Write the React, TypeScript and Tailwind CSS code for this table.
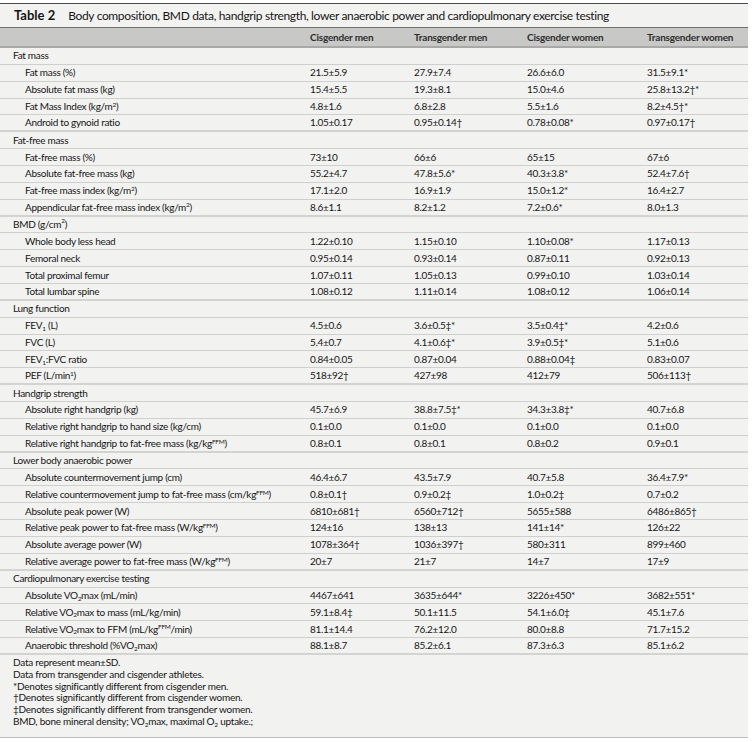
import React from "react";

type Row = { label: React.ReactNode; vals: [string, string, string, string] };
type Section = { title: React.ReactNode; rows: Row[] };

const Sup = ({ children }: { children: React.ReactNode }) => (
  <sup className="text-[6.5px]">{children}</sup>
);
const Sub = ({ children }: { children: React.ReactNode }) => (
  <sub className="text-[6.5px]">{children}</sub>
);

const VO2 = () => (
  <>
    VO<Sub>2</Sub>
  </>
);

const sections: Section[] = [
  {
    title: "Fat mass",
    rows: [
      { label: "Fat mass (%)", vals: ["21.5±5.9", "27.9±7.4", "26.6±6.0", "31.5±9.1*"] },
      { label: "Absolute fat mass (kg)", vals: ["15.4±5.5", "19.3±8.1", "15.0±4.6", "25.8±13.2†*"] },
      {
        label: (
          <>
            Fat Mass Index (kg/m<Sup>2</Sup>)
          </>
        ),
        vals: ["4.8±1.6", "6.8±2.8", "5.5±1.6", "8.2±4.5†*"],
      },
      { label: "Android to gynoid ratio", vals: ["1.05±0.17", "0.95±0.14†", "0.78±0.08*", "0.97±0.17†"] },
    ],
  },
  {
    title: "Fat-free mass",
    rows: [
      { label: "Fat-free mass (%)", vals: ["73±10", "66±6", "65±15", "67±6"] },
      { label: "Absolute fat-free mass (kg)", vals: ["55.2±4.7", "47.8±5.6*", "40.3±3.8*", "52.4±7.6†"] },
      {
        label: (
          <>
            Fat-free mass index (kg/m<Sup>2</Sup>)
          </>
        ),
        vals: ["17.1±2.0", "16.9±1.9", "15.0±1.2*", "16.4±2.7"],
      },
      {
        label: (
          <>
            Appendicular fat-free mass index (kg/m<Sup>2</Sup>)
          </>
        ),
        vals: ["8.6±1.1", "8.2±1.2", "7.2±0.6*", "8.0±1.3"],
      },
    ],
  },
  {
    title: (
      <>
        BMD (g/cm<Sup>2</Sup>)
      </>
    ),
    rows: [
      { label: "Whole body less head", vals: ["1.22±0.10", "1.15±0.10", "1.10±0.08*", "1.17±0.13"] },
      { label: "Femoral neck", vals: ["0.95±0.14", "0.93±0.14", "0.87±0.11", "0.92±0.13"] },
      { label: "Total proximal femur", vals: ["1.07±0.11", "1.05±0.13", "0.99±0.10", "1.03±0.14"] },
      { label: "Total lumbar spine", vals: ["1.08±0.12", "1.11±0.14", "1.08±0.12", "1.06±0.14"] },
    ],
  },
  {
    title: "Lung function",
    rows: [
      {
        label: (
          <>
            FEV<Sub>1</Sub> (L)
          </>
        ),
        vals: ["4.5±0.6", "3.6±0.5‡*", "3.5±0.4‡*", "4.2±0.6"],
      },
      { label: "FVC (L)", vals: ["5.4±0.7", "4.1±0.6‡*", "3.9±0.5‡*", "5.1±0.6"] },
      {
        label: (
          <>
            FEV<Sub>1</Sub>:FVC ratio
          </>
        ),
        vals: ["0.84±0.05", "0.87±0.04", "0.88±0.04‡", "0.83±0.07"],
      },
      {
        label: (
          <>
            PEF (L/min<Sup>1</Sup>)
          </>
        ),
        vals: ["518±92†", "427±98", "412±79", "506±113†"],
      },
    ],
  },
  {
    title: "Handgrip strength",
    rows: [
      { label: "Absolute right handgrip (kg)", vals: ["45.7±6.9", "38.8±7.5‡*", "34.3±3.8‡*", "40.7±6.8"] },
      { label: "Relative right handgrip to hand size (kg/cm)", vals: ["0.1±0.0", "0.1±0.0", "0.1±0.0", "0.1±0.0"] },
      {
        label: (
          <>
            Relative right handgrip to fat-free mass (kg/kg<Sup>FFM</Sup>)
          </>
        ),
        vals: ["0.8±0.1", "0.8±0.1", "0.8±0.2", "0.9±0.1"],
      },
    ],
  },
  {
    title: "Lower body anaerobic power",
    rows: [
      { label: "Absolute countermovement jump (cm)", vals: ["46.4±6.7", "43.5±7.9", "40.7±5.8", "36.4±7.9*"] },
      {
        label: (
          <>
            Relative countermovement jump to fat-free mass (cm/kg<Sup>FFM</Sup>)
          </>
        ),
        vals: ["0.8±0.1†", "0.9±0.2‡", "1.0±0.2‡", "0.7±0.2"],
      },
      { label: "Absolute peak power (W)", vals: ["6810±681†", "6560±712†", "5655±588", "6486±865†"] },
      {
        label: (
          <>
            Relative peak power to fat-free mass (W/kg<Sup>FFM</Sup>)
          </>
        ),
        vals: ["124±16", "138±13", "141±14*", "126±22"],
      },
      { label: "Absolute average power (W)", vals: ["1078±364†", "1036±397†", "580±311", "899±460"] },
      {
        label: (
          <>
            Relative average power to fat-free mass (W/kg<Sup>FFM</Sup>)
          </>
        ),
        vals: ["20±7", "21±7", "14±7", "17±9"],
      },
    ],
  },
  {
    title: "Cardiopulmonary exercise testing",
    rows: [
      {
        label: (
          <>
            Absolute <VO2 />max (mL/min)
          </>
        ),
        vals: ["4467±641", "3635±644*", "3226±450*", "3682±551*"],
      },
      {
        label: (
          <>
            Relative <VO2 />max to mass (mL/kg/min)
          </>
        ),
        vals: ["59.1±8.4‡", "50.1±11.5", "54.1±6.0‡", "45.1±7.6"],
      },
      {
        label: (
          <>
            Relative <VO2 />max to FFM (mL/kg<Sup>FFM</Sup>/min)
          </>
        ),
        vals: ["81.1±14.4", "76.2±12.0", "80.0±8.8", "71.7±15.2"],
      },
      {
        label: (
          <>
            Anaerobic threshold (%<VO2 />max)
          </>
        ),
        vals: ["88.1±8.7", "85.2±6.1", "87.3±6.3", "85.1±6.2"],
      },
    ],
  },
];

const grid = "grid grid-cols-[310px_104px_113px_120px_1fr]";

export default function App() {
  return (
    <div className="w-[754px] h-[742px] bg-white pt-[3px] text-[#161616] font-['Lato','Liberation_Sans',sans-serif] overflow-hidden">
      <div className="w-[748px] bg-[#f2f2f1] border-t border-b border-t-[#4a4a4a] border-b-[#bdbdbd]">
        <div className="h-[23px] flex items-center pl-[14px] text-[12px] tracking-[-0.35px]">
          <span className="font-bold text-[13px] tracking-normal mr-[13px]">Table 2</span>
          <span>
            Body composition, BMD data, handgrip strength, lower anaerobic power and cardiopulmonary exercise testing
          </span>
        </div>

        <div
          className={`${grid} h-[21px] items-center bg-[#c8c8c7] border-t border-b-2 border-t-[#6e6e6e] border-b-[#a8a8a8] text-[10px] tracking-[-0.2px] font-bold text-[#2e2e2e]`}
        >
          <div />
          <div>Cisgender men</div>
          <div>Transgender men</div>
          <div>Cisgender women</div>
          <div>Transgender women</div>
        </div>

        <div className="text-[10px] tracking-[-0.3px]">
          {sections.map((s, si) => (
            <div key={si}>
              <div className="h-[16.86px] flex items-center pl-[13px] border-b border-[#cfcfcf]">{s.title}</div>
              {s.rows.map((r, ri) => (
                <div
                  key={ri}
                  className={`${grid} h-[16.86px] items-center ${
                    ri === s.rows.length - 1 ? "border-b-2 border-[#d3d3d3]" : "border-b border-[#cfcfcf]"
                  }`}
                >
                  <div className="pl-[25px] whitespace-nowrap">{r.label}</div>
                  {r.vals.map((v, vi) => (
                    <div key={vi} className="whitespace-nowrap">
                      {v}
                    </div>
                  ))}
                </div>
              ))}
            </div>
          ))}
        </div>

        <div className="pl-[13px] pt-[2px] pb-[9px] text-[10px] tracking-[-0.25px] leading-[11.8px]">
          <div>Data represent mean±SD.</div>
          <div>Data from transgender and cisgender athletes.</div>
          <div>*Denotes significantly different from cisgender men.</div>
          <div>†Denotes significantly different from cisgender women.</div>
          <div>‡Denotes significantly different from transgender women.</div>
          <div>
            BMD, bone mineral density; <VO2 />max, maximal O<Sub>2</Sub> uptake.;
          </div>
        </div>
      </div>
    </div>
  );
}
